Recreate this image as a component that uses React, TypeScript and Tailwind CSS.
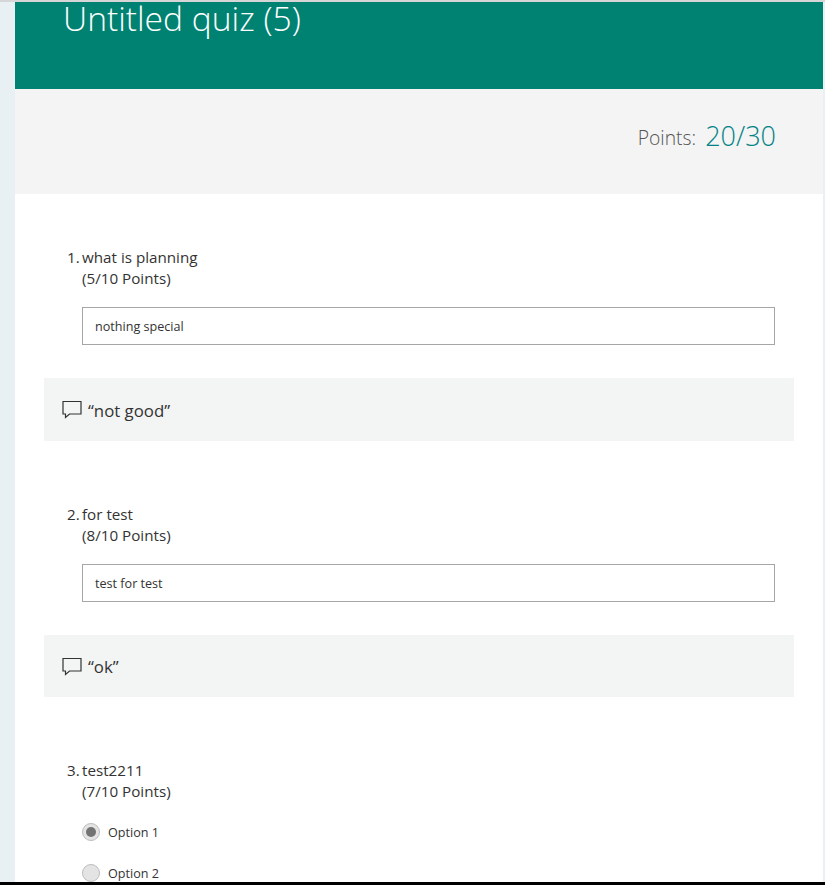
const font = "font-['Open_Sans',sans-serif]"

function CommentIcon() {
  return (
    <svg width="20" height="19" viewBox="0 0 20 19" fill="none" stroke="#333" strokeWidth="1.2" className="shrink-0">
      <path d="M1 1.5h18v12.5H7.5L3.5 17.5V14H1z" />
    </svg>
  )
}

function Question({ num, title, points }: { num: number; title: string; points: string }) {
  return (
    <div className="flex pl-[23px] text-[15.2px] leading-[21px] text-[#333]">
      <div className="w-[15px] shrink-0">{num}.</div>
      <div>
        <div>{title}</div>
        <div>({points} Points)</div>
      </div>
    </div>
  )
}

function Answer({ text }: { text: string }) {
  return (
    <div className="ml-[38px] mt-[18px] flex h-[38px] w-[693px] items-center border border-[#a6a6a6] bg-white pl-3 text-[12.6px] text-[#333]">
      <span className="mt-[2px]">{text}</span>
    </div>
  )
}

function Comment({ text, height }: { text: string; height: string }) {
  return (
    <div className={`mt-[33px] flex w-[750px] items-center gap-[6px] bg-[#f3f4f4] pl-[18px] text-[16.8px] text-[#333] ${height}`}>
      <CommentIcon />
      <span className="mt-[2px]">{text}</span>
    </div>
  )
}

function Option({ label, selected }: { label: string; selected?: boolean }) {
  return (
    <div className="ml-[38px] flex h-[18px] items-center gap-[8px] text-[12.6px] text-[#333]">
      <div className="flex h-[18px] w-[18px] items-center justify-center rounded-full border border-[#bdbdbd] bg-[#e4e4e4]">
        {selected && <div className="h-[10px] w-[10px] rounded-full bg-[#737373]" />}
      </div>
      <span className="mt-[2px]">{label}</span>
    </div>
  )
}

export default function App() {
  return (
    <div className={`flex h-[885px] w-[825px] flex-col overflow-hidden bg-[#e8f0f3] ${font}`}>
      <div className="h-[2px] shrink-0 bg-[#d6d6d6]" />
      <div className="min-h-0 flex-1 overflow-hidden pl-[15px] pr-[2px]">
        <div className="flex h-[87px] bg-[#008272] pl-[48px] text-[33.6px] font-light leading-[33px] text-white">
          <div>Untitled quiz (5)</div>
        </div>
        <div className="flex h-[105px] items-center justify-end gap-[9px] bg-[#f4f4f4] pb-[11px] pr-[47px]">
          <span className="mt-[5px] text-[19.3px] font-light text-[#555]">Points:</span>
          <span className="text-[27px] font-light text-[#038387]">20/30</span>
        </div>
        <div className="h-full bg-white pl-[29px] pt-[53px]">
          <Question num={1} title="what is planning" points="5/10" />
          <Answer text="nothing special" />
          <Comment text="“not good”" height="h-[63px]" />
          <div className="mt-[63px]">
            <Question num={2} title="for test" points="8/10" />
          </div>
          <Answer text="test for test" />
          <Comment text="“ok”" height="h-[62px]" />
          <div className="mt-[63px]">
            <Question num={3} title="test2211" points="7/10" />
          </div>
          <div className="mt-[21px] flex flex-col gap-[23px]">
            <Option label="Option 1" selected />
            <Option label="Option 2" />
          </div>
        </div>
      </div>
      <div className="h-[3px] shrink-0 bg-black" />
    </div>
  )
}
